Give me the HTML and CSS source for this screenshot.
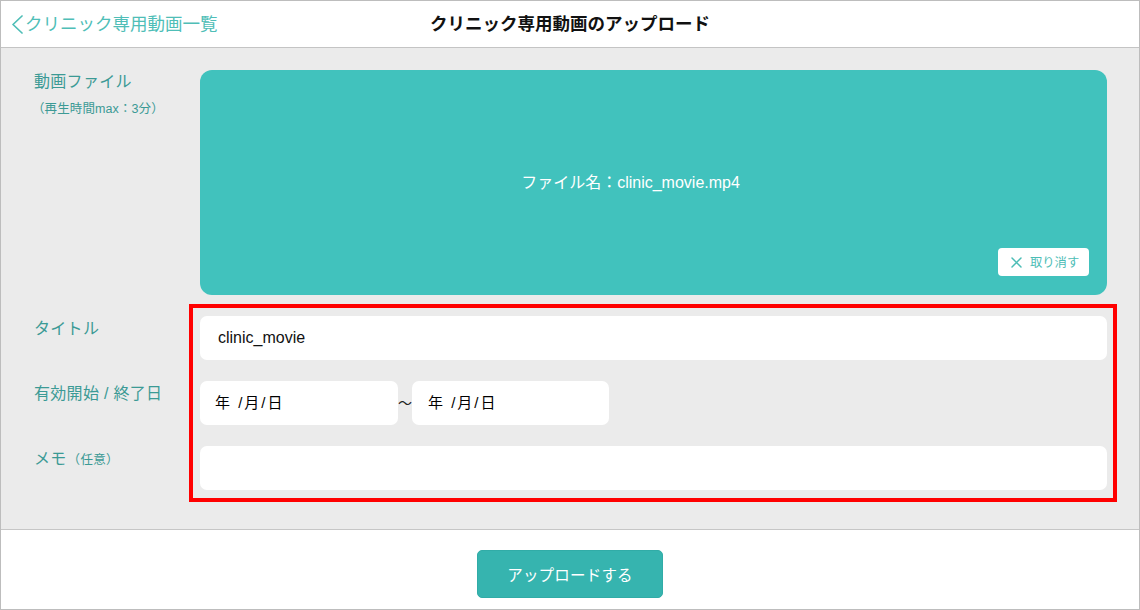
FILE: index.html
```html
<!DOCTYPE html>
<html lang="ja">
<head>
<meta charset="utf-8">
<title>クリニック専用動画のアップロード</title>
<link rel="stylesheet" href="styles.css">
</head>
<body>
<div class="screen">
  <header class="topbar">
    <a class="back" href="#">
      <svg class="chev" width="13" height="19" viewBox="0 0 13 19" aria-hidden="true"><polyline points="11,1 2,9.5 11,18" fill="none" stroke="currentColor" stroke-width="1.7" stroke-linecap="round" stroke-linejoin="round"/></svg>
      <span>クリニック専用動画一覧</span>
    </a>
    <h1 class="title">クリニック専用動画のアップロード</h1>
    <div class="spacer"></div>
  </header>

  <main class="form">
    <div class="label label-top">
      <span>動画ファイル</span>
      <span class="sub">（再生時間max：3分）</span>
    </div>
    <div class="dropzone">
      <p class="filename">ファイル名：clinic_movie.mp4</p>
      <button class="cancel" type="button">
        <svg width="11" height="11" viewBox="0 0 11 11" aria-hidden="true"><path d="M1 1 L10 10 M10 1 L1 10" stroke="currentColor" stroke-width="1.5" stroke-linecap="round"/></svg>
        <span>取り消す</span>
      </button>
    </div>

    <div class="label">タイトル</div>
    <div class="field field-text">clinic_movie</div>

    <div class="label">有効開始 / 終了日</div>
    <div class="dates">
      <div class="field date date-start">年 /月/日</div>
      <span class="tilde">〜</span>
      <div class="field date date-end">年 /月/日</div>
    </div>

    <div class="label">メモ<span class="opt">（任意）</span></div>
    <div class="field field-memo"></div>
  </main>

  <footer class="actions">
    <button class="upload" type="button">アップロードする</button>
  </footer>

  <div class="highlight"></div>
</div>
</body>
</html>
```

FILE: styles.css
```css
* { box-sizing: border-box; }

html, body {
  margin: 0;
  padding: 0;
  background: #ffffff;
}

body {
  font-family: "Liberation Sans", "Noto Sans CJK JP", sans-serif;
}

.screen {
  position: relative;
  width: 1140px;
  height: 610px;
  border: 1px solid #bdbdbd;
  display: flex;
  flex-direction: column;
  background: #ffffff;
}

/* header */
.topbar {
  height: 47px;
  flex: 0 0 47px;
  border-bottom: 1px solid #c4c4c4;
  display: grid;
  grid-template-columns: 1fr auto 1fr;
  align-items: center;
  background: #ffffff;
}

.back {
  display: flex;
  align-items: center;
  gap: 1px;
  padding-left: 10px;
  color: #4fbeb7;
  text-decoration: none;
  font-size: 17.5px;
  line-height: 24px;
  letter-spacing: 0;
}

.chev { display: block; margin-top: 1px; }

.title {
  margin: 0;
  font-size: 17.5px;
  font-weight: 700;
  line-height: 24px;
  color: #111111;
}

/* form area */
.form {
  flex: 1 1 auto;
  background: #ebebeb;
  border-bottom: 1px solid #c6c6c6;
  display: grid;
  grid-template-columns: 166px 907px;
  grid-auto-rows: auto;
  row-gap: 21px;
  align-content: start;
  padding: 22px 0 0 33px;
  margin: 0;
}

.label {
  color: #3b9a95;
  font-size: 16px;
  line-height: 26px;
  letter-spacing: 0.3px;
}

.label-top {
  display: flex;
  flex-direction: column;
  line-height: 24px;
}

.label .sub {
  font-size: 12.5px;
  line-height: 18px;
  margin-top: 6px;
  margin-left: -2px;
  letter-spacing: 0.1px;
}

.label .opt {
  font-size: 12.5px;
  margin-left: 1px;
}

.dropzone {
  height: 225px;
  background: #41c2bd;
  border-radius: 12px;
  display: grid;
  grid-template-columns: 1fr;
  grid-template-rows: 1fr;
}

.filename {
  grid-area: 1 / 1;
  place-self: center;
  margin: 0 46px 0 0;
  color: #ffffff;
  font-size: 16px;
  line-height: 24px;
}

.cancel {
  grid-area: 1 / 1;
  justify-self: end;
  align-self: end;
  margin: 0 18px 19px 0;
  height: 28px;
  width: 91px;
  padding: 0 0 0 13px;
  border: none;
  border-radius: 4px;
  background: #ffffff;
  color: #4cbdb6;
  font-family: inherit;
  font-size: 12.3px;
  display: flex;
  align-items: center;
  gap: 8px;
  cursor: pointer;
}

.cancel svg { display: block; }

.field {
  height: 44px;
  background: #ffffff;
  border-radius: 7px;
  display: flex;
  align-items: center;
  color: #111111;
  font-size: 16px;
}

.field-text { padding-left: 18px; }

.dates {
  display: flex;
  align-items: center;
}

.date {
  font-size: 15px;
  letter-spacing: 2px;
  color: #000000;
  padding-bottom: 3px;
}

.date-start { width: 198px; padding-left: 15px; }
.date-end { width: 197px; padding-left: 16px; }

.tilde {
  width: 14px;
  font-size: 14px;
  line-height: 20px;
  text-align: center;
  color: #222222;
  overflow: hidden;
}

/* footer */
.actions {
  flex: 0 0 79px;
  display: flex;
  justify-content: center;
  align-items: flex-start;
  padding-top: 20px;
  background: #ffffff;
}

.upload {
  width: 186px;
  height: 48px;
  border: 1px solid #31aca7;
  border-radius: 5px;
  background: #36b4af;
  color: #ffffff;
  font-family: inherit;
  font-size: 15.5px;
  letter-spacing: 0.2px;
  cursor: pointer;
}

/* annotation overlay */
.highlight {
  position: absolute;
  left: 188px;
  top: 303px;
  width: 928px;
  height: 198px;
  border: 4px solid #ff0000;
  pointer-events: none;
}
```
